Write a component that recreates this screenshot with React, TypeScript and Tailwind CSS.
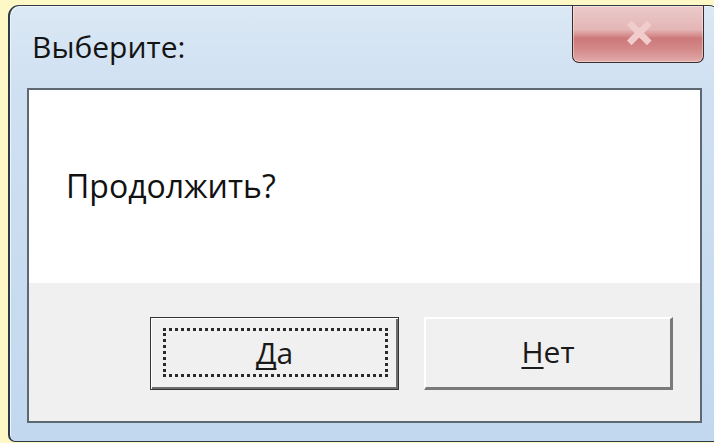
import React from "react";

const font = { fontFamily: '"Open Sans", "Noto Sans", "DejaVu Sans", sans-serif' };

function CloseButton() {
  return (
    <div className="relative ml-auto mr-[15px] h-[57px] w-[132px] overflow-hidden rounded-b-[7px] border border-t-0 border-[#3b2a2a] bg-[linear-gradient(to_bottom,#eccaca_0%,#e4b6b6_42%,#cd7878_58%,#d48a8a_78%,#e2aaaa_100%)] shadow-[inset_0_0_0_1px_rgba(255,255,255,0.4)]">
      <svg className="absolute left-1/2 top-1/2 -translate-x-[46%] -translate-y-[54%]" width="32" height="28" viewBox="0 0 32 28">
        <path d="M6 4 L26 24 M26 4 L6 24" stroke="#f1cccc" strokeWidth="6.5" strokeLinecap="butt" />
      </svg>
    </div>
  );
}

function Button({ label, rest, focused }: { label: string; rest: string; focused?: boolean }) {
  return (
    <div
      className={
        "relative flex h-[73px] w-[249px] items-center justify-center bg-[#f0f0f0] " +
        (focused
          ? "border border-[#333333] shadow-[inset_1px_1px_0_#ffffff,inset_-2px_-2px_0_#6e6e6e]"
          : "border-t-2 border-l-2 border-t-white border-l-white border-r-[3px] border-b-[3px] border-r-[#7a7a7a] border-b-[#7a7a7a]")
      }
    >
      {focused && (
        <div className="absolute bottom-[12px] left-[12px] right-[10px] top-[10px] border-[3px] border-dotted border-[#2a2a2a]" />
      )}
      <span className="pb-[2px] text-[30px] leading-none text-[#1a1a1a]" style={font}>
        <span className="underline decoration-[2px] underline-offset-[4px] [text-decoration-skip-ink:none]">{label}</span>
        {rest}
      </span>
    </div>
  );
}

export default function App() {
  return (
    <div className="h-[443px] w-[714px] overflow-hidden bg-[#fdf8c6] pl-[8px] pt-[5px]">
      <div className="flex h-[437px] w-[712px] flex-col rounded-t-[11px] rounded-b-[7px] border border-l-2 border-[#2e3a44] bg-[linear-gradient(to_bottom,#dbe8f4_0%,#cfe0f2_20%,#c2d8ef_100%)] shadow-[inset_1px_1px_0_#eef5fb]">
        <div className="flex h-[82px] items-start">
          <div className="pl-[22px] pt-[26px] text-[30px] leading-none text-[#141414]" style={font}>
            Выберите:
          </div>
          <CloseButton />
        </div>
        <div className="mx-[17px] flex h-[335px] flex-col border-2 border-[#5e6872]">
          <div className="flex h-[193px] items-center bg-white pl-[37px]">
            <span className="pb-[2px] text-[32px] leading-none text-[#111]" style={font}>
              Продолжить?
            </span>
          </div>
          <div className="flex flex-1 items-start gap-[25px] bg-[#f0f0f0] pl-[121px] pt-[34px]">
            <Button label="Д" rest="а" focused />
            <Button label="Н" rest="ет" />
          </div>
        </div>
      </div>
    </div>
  );
}
